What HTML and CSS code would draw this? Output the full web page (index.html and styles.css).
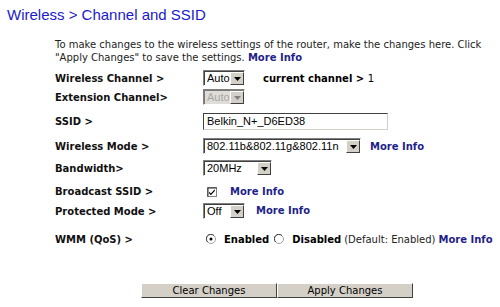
FILE: index.html
```html
<!DOCTYPE html>
<html lang="en">
<head>
  <meta charset="UTF-8" />
  <title>Channel and SSID</title>
  <link rel="stylesheet" href="styles.css">
</head>
<body>
  <h1 class="title">Wireless &gt; Channel and SSID</h1>
  <div class="content">
    <p class="intro">To make changes to the wireless settings of the router, make the changes here. Click "Apply Changes" to save the settings. <a href="#" class="info">More Info</a></p>

    <form id="channelForm">
      <div class="row r1">
        <label class="name">Wireless Channel &gt;</label>
        <span class="dd w42">
          <select name="channel"><option>Auto</option></select>
          <span class="arrow"><svg width="7" height="4" viewBox="0 0 7 4"><path d="M0 0h7L3.5 4z" fill="#000"/></svg></span>
        </span>
        <span class="current">current channel &gt; <span class="plain">1</span></span>
      </div>

      <div class="row r2">
        <label class="name">Extension Channel&gt;</label>
        <span class="dd w42 off">
          <select name="ext_channel" disabled><option>Auto</option></select>
          <span class="arrow"><svg width="7" height="4" viewBox="0 0 7 4"><path d="M0 0h7L3.5 4z" fill="#808080"/></svg></span>
        </span>
      </div>

      <div class="row r3">
        <label class="name">SSID &gt;</label>
        <input type="text" class="text" name="ssid" value="Belkin_N+_D6ED38" />
      </div>

      <div class="row r4">
        <label class="name">Wireless Mode &gt;</label>
        <span class="dd w158">
          <select name="mode"><option>802.11b&amp;802.11g&amp;802.11n</option></select>
          <span class="arrow"><svg width="7" height="4" viewBox="0 0 7 4"><path d="M0 0h7L3.5 4z" fill="#000"/></svg></span>
        </span>
        <a href="#" class="info gap">More Info</a>
      </div>

      <div class="row r5">
        <label class="name">Bandwidth&gt;</label>
        <span class="dd w69">
          <select name="bandwidth"><option>20MHz</option></select>
          <span class="arrow"><svg width="7" height="4" viewBox="0 0 7 4"><path d="M0 0h7L3.5 4z" fill="#000"/></svg></span>
        </span>
      </div>

      <div class="row r6">
        <label class="name">Broadcast SSID &gt;</label>
        <span class="check">
          <svg width="10" height="10" viewBox="0 0 10 10">
            <rect x="0.5" y="0.5" width="9" height="9" fill="#fff" stroke="#808080"/>
            <path d="M1 9.5V1h8.5" fill="none" stroke="#303030"/>
            <path d="M2.2 4.6l1.6 1.8 4-4.2v1.8l-4 4.2-1.6-1.8z" fill="#000"/>
          </svg>
        </span>
        <a href="#" class="info gap2">More Info</a>
      </div>

      <div class="row r7">
        <label class="name">Protected Mode &gt;</label>
        <span class="dd w42">
          <select name="protected"><option>Off</option></select>
          <span class="arrow"><svg width="7" height="4" viewBox="0 0 7 4"><path d="M0 0h7L3.5 4z" fill="#000"/></svg></span>
        </span>
        <a href="#" class="info gap3">More Info</a>
      </div>

      <div class="row r8">
        <label class="name">WMM (QoS) &gt;</label>
        <span class="radio first">
          <svg width="10" height="10" viewBox="0 0 10 10">
            <circle cx="5" cy="5" r="4.5" fill="#fff" stroke="#a0a0a0"/>
            <path d="M1.6 8A4.2 4.2 0 0 1 8 1.6" fill="none" stroke="#404040"/>
            <circle cx="5" cy="5" r="1.5" fill="#000"/>
          </svg>
        </span>
        <b class="opt">Enabled</b>
        <span class="radio">
          <svg width="10" height="10" viewBox="0 0 10 10">
            <circle cx="5" cy="5" r="4.5" fill="#fff" stroke="#a0a0a0"/>
            <path d="M1.6 8A4.2 4.2 0 0 1 8 1.6" fill="none" stroke="#404040"/>
          </svg>
        </span>
        <b class="opt">Disabled</b>
        <span class="note">(Default: Enabled)</span>
        <a href="#" class="info tail">More Info</a>
      </div>

      <div class="buttons">
        <button type="reset" class="btn">Clear Changes</button>
        <button type="submit" class="btn">Apply Changes</button>
      </div>
    </form>
  </div>
</body>
</html>
```

FILE: styles.css
```css
body {
  margin: 0;
  background: #fff;
  color: #000;
  font-family: "DejaVu Sans", Verdana, sans-serif;
  font-size: 10px;
}
.title {
  margin: 0;
  padding: 6px 7px 0;
  font-family: "Liberation Sans", Arial, sans-serif;
  font-size: 15px;
  font-weight: normal;
  line-height: 18px;
  color: #1a1acc;
}
.content {
  margin-left: 55px;
  width: 445px;
}
.intro {
  margin: 14px 0 0;
  line-height: 13px;
  color: #222;
}
a.info {
  color: #1f1f8a;
  font-weight: bold;
  text-decoration: none;
}
form {
  margin-top: 5px;
}
.row {
  display: flex;
  align-items: center;
  white-space: nowrap;
}
.row > * {
  flex: none;
}
.r1 { height: 18px; }
.r2 { height: 20px; }
.r3 { height: 28px; }
.r4 { height: 22px; }
.r5 { height: 22px; }
.r6 { height: 24px; }
.r7 { height: 16px; }
.r8 { height: 40px; }
.name {
  width: 148px;
  font-weight: bold;
  color: #111;
}
.dd {
  position: relative;
  display: inline-block;
  height: 16px;
  box-sizing: border-box;
  border: 1px solid;
  border-color: #808080 #fff #fff #808080;
}
.dd select {
  appearance: none;
  width: 100%;
  height: 14px;
  margin: 0;
  padding: 0 0 0 2px;
  border: 0;
  border-top: 1px solid #404040;
  border-left: 1px solid #404040;
  box-sizing: border-box;
  background: #fff;
  font-family: "Liberation Sans", Arial, sans-serif;
  font-size: 11px;
  line-height: 13px;
  color: #000;
  outline: none;
}
.dd.off select {
  background: #d4d0c8;
  color: #808080;
}
.dd .arrow {
  position: absolute;
  top: 1px;
  right: 0;
  width: 14px;
  height: 13px;
  box-sizing: border-box;
  background: #d4d0c8;
  border: 1px solid;
  border-color: #fff #404040 #404040 #fff;
  display: flex;
  align-items: center;
  justify-content: center;
}
.w42 { width: 42px; }
.w69 { width: 69px; }
.w158 { width: 158px; }
.current {
  margin-left: 18px;
  font-weight: bold;
}
.current .plain {
  font-weight: normal;
}
.text {
  width: 185px;
  height: 17px;
  box-sizing: border-box;
  margin: 0;
  padding: 0 3px;
  border: 1px solid;
  border-color: #404040 #d4d0c8 #d4d0c8 #404040;
  font-family: "Liberation Sans", Arial, sans-serif;
  font-size: 11px;
  color: #000;
}
.gap { margin-left: 9px; }
.gap2 { margin-left: 13px; }
.gap3 { margin-left: 11px; margin-top: -2px; }
.check {
  display: flex;
  margin-left: 4px;
  margin-top: 2px;
}
.radio {
  display: flex;
  margin-top: -1px;
}
.radio.first {
  margin-left: 3px;
}
.opt {
  margin-left: 8px;
  margin-right: 5px;
}
.opt + .note {
  margin-left: -2px;
}
.note {
  color: #222;
}
.tail {
  margin-left: 3px;
}
.buttons {
  display: flex;
  margin-left: 86px;
  margin-top: 24px;
}
.btn {
  width: 136px;
  height: 15px;
  margin: 0;
  padding: 0;
  background: #d4d0c8;
  border: 1px solid;
  border-color: #fff #404040 #404040 #fff;
  font-family: "DejaVu Sans", Verdana, sans-serif;
  font-size: 10px;
  line-height: 12px;
  color: #000;
}
```
